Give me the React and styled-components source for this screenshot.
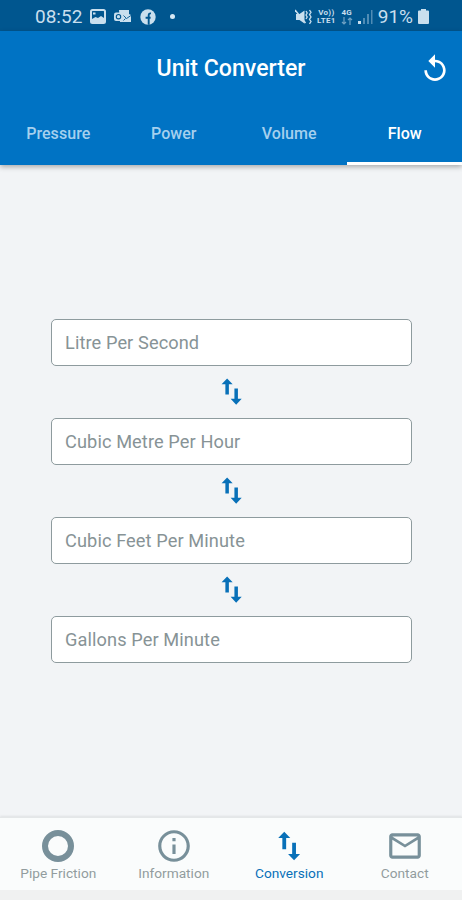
import { useState } from "react";
import styled, { createGlobalStyle } from "styled-components";
import { MdReplay, MdInfoOutline, MdMailOutline } from "react-icons/md";

const GlobalStyle = createGlobalStyle`
  * {
    box-sizing: border-box;
  }

  body {
    margin: 0;
    background: #f2f4f6;
    font-family: Roboto, sans-serif;
  }
`;

const Screen = styled.div`
  display: flex;
  flex-direction: column;
  height: 100vh;
  min-height: 900px;
  overflow: hidden;
`;

const StatusBar = styled.div`
  display: flex;
  align-items: center;
  justify-content: space-between;
  height: 31px;
  padding: 2px 33px 0 35px;
  background: #00568f;
  color: #c9dfee;
  flex-shrink: 0;
`;

const StatusGroup = styled.div`
  display: flex;
  align-items: center;
  gap: ${(props) => props.$gap}px;
`;

const StatusText = styled.span`
  font-size: 19px;
  line-height: 28px;
`;

const Dot = styled.span`
  width: 5px;
  height: 5px;
  margin-left: 6px;
  border-radius: 50%;
  background: #d5e8f5;
`;

const Stack = styled.div`
  display: grid;
  grid-template-rows: 8px 8px;
  justify-items: center;
  font-size: 8px;
  font-weight: 700;
  line-height: 8px;
  letter-spacing: 0.3px;
`;

const StackLine = styled.span`
  height: 8px;
  overflow: hidden;
`;

const Header = styled.header`
  display: flex;
  flex-direction: column;
  height: 134px;
  background: #0073c4;
  color: #fff;
  box-shadow: 0 2px 5px rgba(0, 0, 0, 0.3);
  flex-shrink: 0;
`;

const TitleRow = styled.div`
  display: grid;
  grid-template-columns: 1fr auto 1fr;
  align-items: center;
  height: 72px;
  padding: 3px 11px 0 11px;
`;

const Title = styled.h1`
  grid-column: 2;
  margin: 0;
  font-size: 23.1px;
  font-weight: 500;
  line-height: 31px;
`;

const ResetButton = styled.button`
  display: flex;
  justify-self: end;
  padding: 0;
  border: none;
  background: none;
  color: #fff;
  cursor: pointer;
`;

const Tabs = styled.nav`
  display: grid;
  grid-template-columns: repeat(4, 1fr);
  flex: 1;
`;

const Tab = styled.button`
  padding: 1px 0 0 1px;
  border: none;
  border-bottom: 3px solid ${(props) => (props.$active ? "#fff" : "transparent")};
  background: none;
  color: ${(props) => (props.$active ? "#fff" : "#a5d0ee")};
  font-family: inherit;
  font-size: 16px;
  font-weight: 500;
  letter-spacing: 0.05px;
  cursor: pointer;
`;

const Form = styled.main`
  display: flex;
  flex: 1;
  flex-direction: column;
  align-items: center;
  justify-content: center;
  padding: 0 50px 0 51px;
`;

const Input = styled.input`
  width: 100%;
  height: 47px;
  padding: 0 13px 1px;
  border: 1px solid #8e9b9e;
  border-radius: 5px;
  background: #fff;
  color: #37474f;
  font-family: inherit;
  font-size: 18.2px;
  letter-spacing: 0.1px;
  outline: none;

  &::placeholder {
    color: #879396;
    opacity: 1;
  }
`;

const Divider = styled.div`
  display: flex;
  align-items: center;
  justify-content: center;
  height: 52px;
  padding-bottom: 1px;
  color: #0870b8;
`;

const BottomNav = styled.nav`
  display: grid;
  grid-template-columns: repeat(4, 1fr);
  height: 73px;
  border-top: 1px solid #e4e7e8;
  background: #fafcfc;
  box-shadow: 0 -1px 2px rgba(0, 0, 0, 0.08);
  flex-shrink: 0;
`;

const NavItem = styled.button`
  display: flex;
  flex-direction: column;
  align-items: center;
  padding: 9px 0 0 1px;
  border: none;
  background: none;
  color: ${(props) => (props.$active ? "#0870b8" : "#78909a")};
  font-family: inherit;
  cursor: pointer;
`;

const NavLabel = styled.span`
  margin-top: -1px;
  color: ${(props) => (props.$active ? "#0870b8" : "#929c9e")};
  font-size: 13.7px;
  line-height: 18px;
`;

const SystemStrip = styled.div`
  height: 10px;
  background: #f0f1f1;
  flex-shrink: 0;
`;

const PictureIcon = () => (
  <svg width="16" height="15" viewBox="0 0 16 15">
    <rect x="1" y="1" width="14" height="13" rx="1.5" fill="none" stroke="currentColor" strokeWidth="2" />
    <path d="M2 10l3.5-2L8 9l3-2 3 2v4H2z" fill="currentColor" />
    <path d="M3 3.5h2.5v2H3z" fill="currentColor" />
  </svg>
);

const OutlookIcon = () => (
  <svg width="18" height="15" viewBox="0 0 18 15">
    <path d="M5 1h10v4l2 1v7H6z" fill="currentColor" />
    <path d="M9.5 6.5l3 3 4.5-3M9.5 11.5l2-2" fill="none" stroke="#00568f" strokeWidth="0.9" />
    <rect x="0" y="3.5" width="9" height="8.5" rx="2" fill="currentColor" />
    <circle cx="4.5" cy="7.7" r="2.2" fill="none" stroke="#00568f" strokeWidth="1.1" />
  </svg>
);

const FacebookIcon = () => (
  <svg width="16" height="16" viewBox="0 0 16 16">
    <circle cx="8" cy="8" r="7.7" fill="currentColor" />
    <path d="M8.7 15.7V6.2c0-1.4.8-2 2.3-1.8M5.6 8.8h5" fill="none" stroke="#00568f" strokeWidth="1.9" />
  </svg>
);

const VibrateIcon = () => (
  <svg width="17" height="16" viewBox="0 0 17 16">
    <path d="M1 5h3.5L9.5 1.5v13L4.5 11H1z" fill="currentColor" />
    <path d="M0 1l10.5 13" stroke="currentColor" strokeWidth="1.5" />
    <path d="M11 2l1.2 2L11 6l1.2 2L11 10M14.5 1L16 3.3l-1.5 2.3L16 8l-1.5 2.3 1.5 2.3-1.5 2.3" fill="none" stroke="currentColor" strokeWidth="1.3" />
  </svg>
);

const DataArrows = () => (
  <svg width="12" height="8" viewBox="0 0 12 8" opacity="0.55">
    <path d="M3 0v7M1 5l2 2 2-2M9 8V1M7 3l2-2 2 2" fill="none" stroke="currentColor" strokeWidth="1.2" />
  </svg>
);

const SignalIcon = () => (
  <svg width="15" height="16" viewBox="0 0 15 16">
    <path d="M0 12h3v3H0z" fill="currentColor" />
    <path d="M5 9h2v6H5zM9 5h2v10H9zM13 1h1.5v14H13z" fill="currentColor" opacity="0.4" />
  </svg>
);

const BatteryIcon = () => (
  <svg width="11" height="15" viewBox="0 0 11 15">
    <path d="M3 0h5v1.5h2q1 0 1 1V14q0 1-1 1H1q-1 0-1-1V2.5q0-1 1-1h2z" fill="currentColor" />
  </svg>
);

const SwapIcon = ({ size }) => (
  <svg width={size} height={size} viewBox="0 0 24 24" fill="currentColor">
    <path d="M9 3L5.2 7h2.6v7h2.4V7h2.6zM16.4 17v-7H14v7h-2.6l3.8 4 3.8-4z" />
  </svg>
);

const RingIcon = () => (
  <svg width="38" height="38" viewBox="0 0 38 38">
    <circle cx="19" cy="19" r="13" fill="none" stroke="currentColor" strokeWidth="6" />
  </svg>
);

const tabs = ["Pressure", "Power", "Volume", "Flow"];

const units = [
  "Litre Per Second",
  "Cubic Metre Per Hour",
  "Cubic Feet Per Minute",
  "Gallons Per Minute",
];

const navItems = [
  { label: "Pipe Friction", icon: <RingIcon /> },
  { label: "Information", icon: <MdInfoOutline size={38} /> },
  { label: "Conversion", icon: <SwapIcon size={38} /> },
  { label: "Contact", icon: <MdMailOutline size={38} /> },
];

const Field = ({ label, last }) => (
  <>
    <Input placeholder={label} aria-label={label} />
    {!last && (
      <Divider>
        <SwapIcon size={35} />
      </Divider>
    )}
  </>
);

const App = () => {
  const [activeTab, setActiveTab] = useState("Flow");
  const [activeNav, setActiveNav] = useState("Conversion");
  const [resetCount, setResetCount] = useState(0);

  return (
    <Screen>
      <GlobalStyle />
      <StatusBar>
        <StatusGroup $gap={8}>
          <StatusText>08:52</StatusText>
          <PictureIcon />
          <OutlookIcon />
          <FacebookIcon />
          <Dot />
        </StatusGroup>
        <StatusGroup $gap={5}>
          <VibrateIcon />
          <Stack>
            <StackLine>Vo))</StackLine>
            <StackLine>LTE1</StackLine>
          </Stack>
          <Stack>
            <StackLine>4G</StackLine>
            <DataArrows />
          </Stack>
          <SignalIcon />
          <StatusText>91%</StatusText>
          <BatteryIcon />
        </StatusGroup>
      </StatusBar>
      <Header>
        <TitleRow>
          <Title>Unit Converter</Title>
          <ResetButton aria-label="Reset" onClick={() => setResetCount(resetCount + 1)}>
            <MdReplay size={32} />
          </ResetButton>
        </TitleRow>
        <Tabs>
          {tabs.map((tab) => (
            <Tab key={tab} $active={tab === activeTab} onClick={() => setActiveTab(tab)}>
              {tab}
            </Tab>
          ))}
        </Tabs>
      </Header>
      <Form key={resetCount}>
        {units.map((unit, i) => (
          <Field key={unit} label={unit} last={i === units.length - 1} />
        ))}
      </Form>
      <BottomNav>
        {navItems.map(({ label, icon }) => (
          <NavItem key={label} $active={label === activeNav} onClick={() => setActiveNav(label)}>
            {icon}
            <NavLabel $active={label === activeNav}>{label}</NavLabel>
          </NavItem>
        ))}
      </BottomNav>
      <SystemStrip />
    </Screen>
  );
};

export default App;
